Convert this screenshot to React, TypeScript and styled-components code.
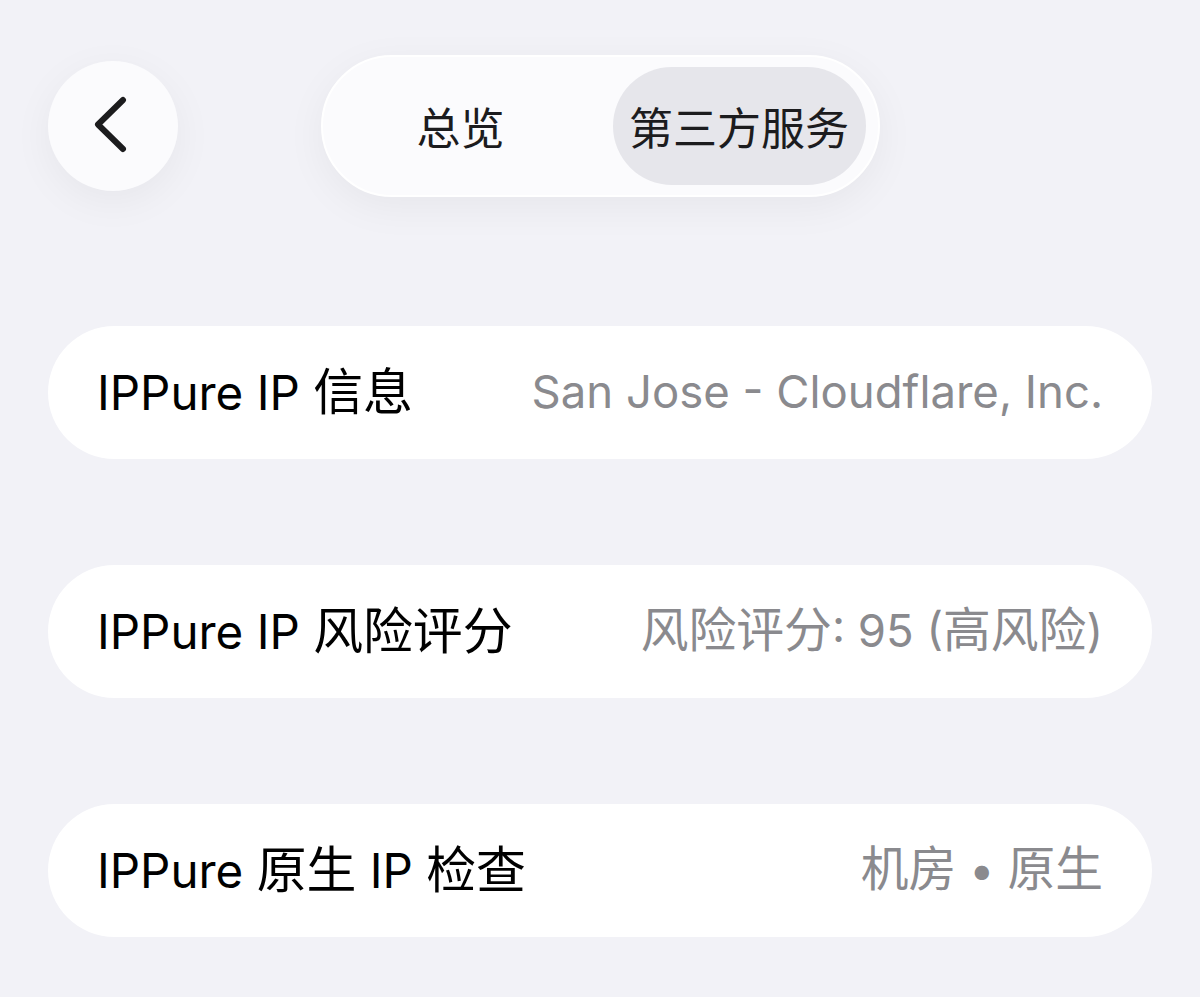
import React from "react";
import styled, { createGlobalStyle } from "styled-components";

const Global = createGlobalStyle`
  html, body {
    margin: 0;
    padding: 0;
    background: #f2f2f7;
  }
  body {
    font-family: Inter, "Noto Sans CJK SC", sans-serif;
    -webkit-font-smoothing: antialiased;
  }
`;

const Page = styled.div`
  padding: 55px 48px 40px;
  box-sizing: border-box;
  min-height: 997px;
  background: #f2f2f7;
`;

const Header = styled.div`
  display: grid;
  grid-template-columns: 1fr auto 1fr;
  align-items: center;
  height: 142px;
`;

const BackButton = styled.button`
  width: 130px;
  height: 130px;
  border-radius: 50%;
  border: none;
  background: #fbfbfd;
  display: flex;
  align-items: center;
  justify-content: center;
  padding: 0;
  box-shadow: 0 10px 40px rgba(0, 0, 0, 0.05);
  justify-self: start;
`;

const Segmented = styled.div`
  display: flex;
  align-items: center;
  gap: 26px;
  height: 142px;
  box-sizing: border-box;
  padding: 12px;
  border-radius: 71px;
  background: #fbfbfd;
  border: 2px solid #ffffff;
  box-shadow: 0 10px 40px rgba(0, 0, 0, 0.05);
`;

const Segment = styled.div<{ $active?: boolean; $w: number }>`
  width: ${(p) => p.$w}px;
  height: 118px;
  border-radius: 59px;
  display: flex;
  align-items: center;
  justify-content: center;
  font-size: 44px;
  color: #1c1c1e;
  background: ${(p) => (p.$active ? "#e6e6eb" : "transparent")};
`;

const List = styled.div`
  display: flex;
  flex-direction: column;
  gap: 106px;
  margin-top: 129px;
`;

const Card = styled.div`
  height: 133px;
  border-radius: 67px;
  background: #ffffff;
  display: flex;
  align-items: center;
  justify-content: space-between;
  padding: 0 49px;
  box-sizing: border-box;
`;

const Label = styled.span`
  font-size: 47.5px;
  line-height: 1.2;
  color: #000000;
  white-space: nowrap;
`;

const Value = styled.span`
  font-size: 45.5px;
  line-height: 1.2;
  color: #8a8a8e;
  white-space: nowrap;
`;

const Han = styled.span`
  font-size: 1.05em;
  line-height: 1;
`;

function Mixed({ text }: { text: string }) {
  const parts = text.split(/([\u3400-\u9fff]+)/).filter((s) => s.length > 0);
  return (
    <>
      {parts.map((p, i) =>
        /[\u3400-\u9fff]/.test(p) ? <Han key={i}>{p}</Han> : <React.Fragment key={i}>{p}</React.Fragment>
      )}
    </>
  );
}

const rows = [
  { label: "IPPure IP 信息", value: "San Jose - Cloudflare, Inc." },
  { label: "IPPure IP 风险评分", value: "风险评分: 95 (高风险)" },
  { label: "IPPure 原生 IP 检查", value: "机房 • 原生" },
];

export default function App() {
  return (
    <>
      <Global />
      <Page>
        <Header>
          <BackButton aria-label="返回">
            <svg width="40" height="60" viewBox="0 0 40 60" fill="none">
              <path
                d="M30 4 L5 28.5 L30 53"
                stroke="#1c1c1e"
                strokeWidth="6"
                strokeLinecap="round"
                strokeLinejoin="round"
              />
            </svg>
          </BackButton>
          <Segmented>
            <Segment $w={252}>总览</Segment>
            <Segment $w={253} $active>
              第三方服务
            </Segment>
          </Segmented>
          <div />
        </Header>
        <List>
          {rows.map((r) => (
            <Card key={r.label}>
              <Label>
                <Mixed text={r.label} />
              </Label>
              <Value>
                <Mixed text={r.value} />
              </Value>
            </Card>
          ))}
        </List>
      </Page>
    </>
  );
}
